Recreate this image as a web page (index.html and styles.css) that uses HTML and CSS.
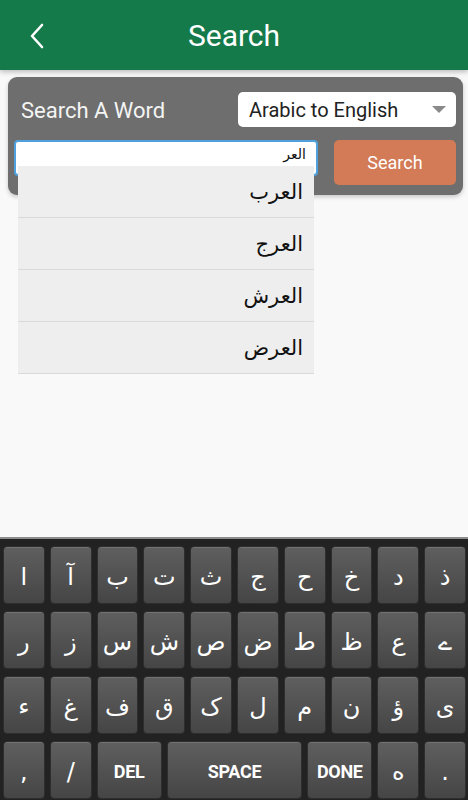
FILE: index.html
```html
<!DOCTYPE html>
<html lang="en">
<head>
  <meta charset="UTF-8">
  <meta name="viewport" content="width=device-width, initial-scale=1.0">
  <title>Search</title>
  <link rel="stylesheet" href="styles.css">
</head>
<body>
  <header class="topbar">
    <span class="back">
      <svg width="16" height="26" viewBox="0 0 16 26"><path d="M13 2 L3 13 L13 24" fill="none" stroke="#fff" stroke-width="2.6" stroke-linecap="round" stroke-linejoin="round"/></svg>
    </span>
    <h1>Search</h1>
    <span></span>
  </header>

  <main class="content">
    <div class="panel">
      <div class="panel-row">
        <span class="label">Search A Word</span>
        <div class="select">
          <span>Arabic to English</span>
          <span class="caret"></span>
        </div>
      </div>
      <div class="panel-row search-row">
        <div class="input-wrap">
          <div class="input" dir="rtl">العر</div>
          <ul class="suggestions" dir="rtl">
            <li>العرب</li>
            <li>العرج</li>
            <li>العرش</li>
            <li>العرض</li>
          </ul>
        </div>
        <button class="search-btn">Search</button>
      </div>
    </div>
  </main>

  <div class="keyboard">
    <div class="key">ا</div><div class="key">آ</div><div class="key">ب</div><div class="key">ت</div><div class="key">ث</div>
    <div class="key">ج</div><div class="key">ح</div><div class="key">خ</div><div class="key">د</div><div class="key">ذ</div>
    <div class="key">ر</div><div class="key">ز</div><div class="key">س</div><div class="key">ش</div><div class="key">ص</div>
    <div class="key">ض</div><div class="key">ط</div><div class="key">ظ</div><div class="key">ع</div><div class="key">ے</div>
    <div class="key">ء</div><div class="key">غ</div><div class="key">ف</div><div class="key">ق</div><div class="key">ک</div>
    <div class="key">ل</div><div class="key">م</div><div class="key">ن</div><div class="key">ؤ</div><div class="key">ى</div>
    <div class="key">,</div><div class="key">/</div>
    <div class="key key-word wide">DEL</div>
    <div class="key key-word space">SPACE</div>
    <div class="key key-word wide">DONE</div>
    <div class="key">ه</div><div class="key">.</div>
  </div>
</body>
</html>
```

FILE: styles.css
```css
html, body {
  margin: 0;
  height: 100%;
}
body {
  display: flex;
  flex-direction: column;
  width: 468px;
  height: 800px;
  overflow: hidden;
  background-color: #f9f9f9;
  font-family: Roboto, "Liberation Sans", "DejaVu Sans", sans-serif;
}
.topbar {
  display: grid;
  grid-template-columns: 70px 1fr 70px;
  align-items: center;
  height: 70px;
  background-color: #157a4a;
  box-shadow: 0 2px 5px rgba(0, 0, 0, 0.25);
  position: relative;
  z-index: 2;
}
.back {
  display: flex;
  padding-left: 29px;
  padding-top: 2px;
}
.topbar h1 {
  margin: 0;
  text-align: center;
  color: #fff;
  font-size: 30px;
  font-weight: 400;
  padding-top: 1px;
}
.content {
  flex: 1;
  padding: 7px 5px 0 8px;
}
.panel {
  background-color: #6d6e6d;
  border-radius: 9px;
  padding: 15px 7px 10px 6px;
  box-shadow: 0 2px 4px rgba(0, 0, 0, 0.2);
}
.panel-row {
  display: flex;
  align-items: center;
  justify-content: space-between;
}
.label {
  color: #f4f4f4;
  font-size: 22px;
  margin-left: 7px;
  padding-top: 2px;
}
.select {
  width: 218px;
  height: 35px;
  box-sizing: border-box;
  background-color: #fff;
  border-radius: 5px;
  display: flex;
  align-items: center;
  justify-content: space-between;
  padding: 0 10px 0 11px;
  font-size: 20px;
  color: #222;
}
.caret {
  width: 0;
  height: 0;
  border-left: 7px solid transparent;
  border-right: 7px solid transparent;
  border-top: 7px solid #8a8a8a;
}
.search-row {
  margin-top: 13px;
  align-items: flex-start;
}
.input-wrap {
  position: relative;
  width: 304px;
}
.input {
  height: 36px;
  box-sizing: border-box;
  background-color: #fff;
  border: 2px solid #4ea1dc;
  border-radius: 4px;
  padding: 4px 10px 0;
  font-family: "DejaVu Sans", sans-serif;
  font-size: 14px;
  color: #111;
}
.suggestions {
  position: absolute;
  top: 26px;
  left: 4px;
  width: 296px;
  margin: 0;
  padding: 0;
  list-style: none;
  background-color: #eeeeee;
  z-index: 3;
}
.suggestions li {
  height: 51px;
  border-bottom: 1px solid #d9d9d9;
  display: flex;
  align-items: center;
  padding-right: 11px;
  font-family: "DejaVu Sans", sans-serif;
  font-size: 21px;
  color: #111;
}
.search-btn {
  width: 122px;
  height: 45px;
  border: none;
  border-radius: 5px;
  background-color: #d27b56;
  color: #fff;
  font-family: Roboto, sans-serif;
  font-size: 18px;
  padding: 0;
}
.keyboard {
  display: grid;
  grid-template-columns: repeat(20, 1fr);
  grid-auto-rows: 58px;
  gap: 7px 5px;
  padding: 7px 2px 0 3px;
  height: 263px;
  box-sizing: border-box;
  background-color: #222;
  border-top: 2px solid #8c8c8c;
}
.key {
  grid-column: span 2;
  display: flex;
  align-items: center;
  justify-content: center;
  border-radius: 4px;
  border: 1px solid #2e2e2e;
  background: linear-gradient(#5f5f5f, #454545);
  box-shadow: inset 0 1px 0 rgba(255, 255, 255, 0.12);
  color: #fff;
  font-family: "DejaVu Sans", sans-serif;
  font-size: 24px;
  padding-top: 4px;
  box-sizing: border-box;
}
.key-word {
  font-family: Roboto, sans-serif;
  font-weight: 700;
  font-size: 18px;
  letter-spacing: -0.3px;
  padding-top: 2px;
}
.wide {
  grid-column: span 3;
}
.space {
  grid-column: span 6;
}
```
